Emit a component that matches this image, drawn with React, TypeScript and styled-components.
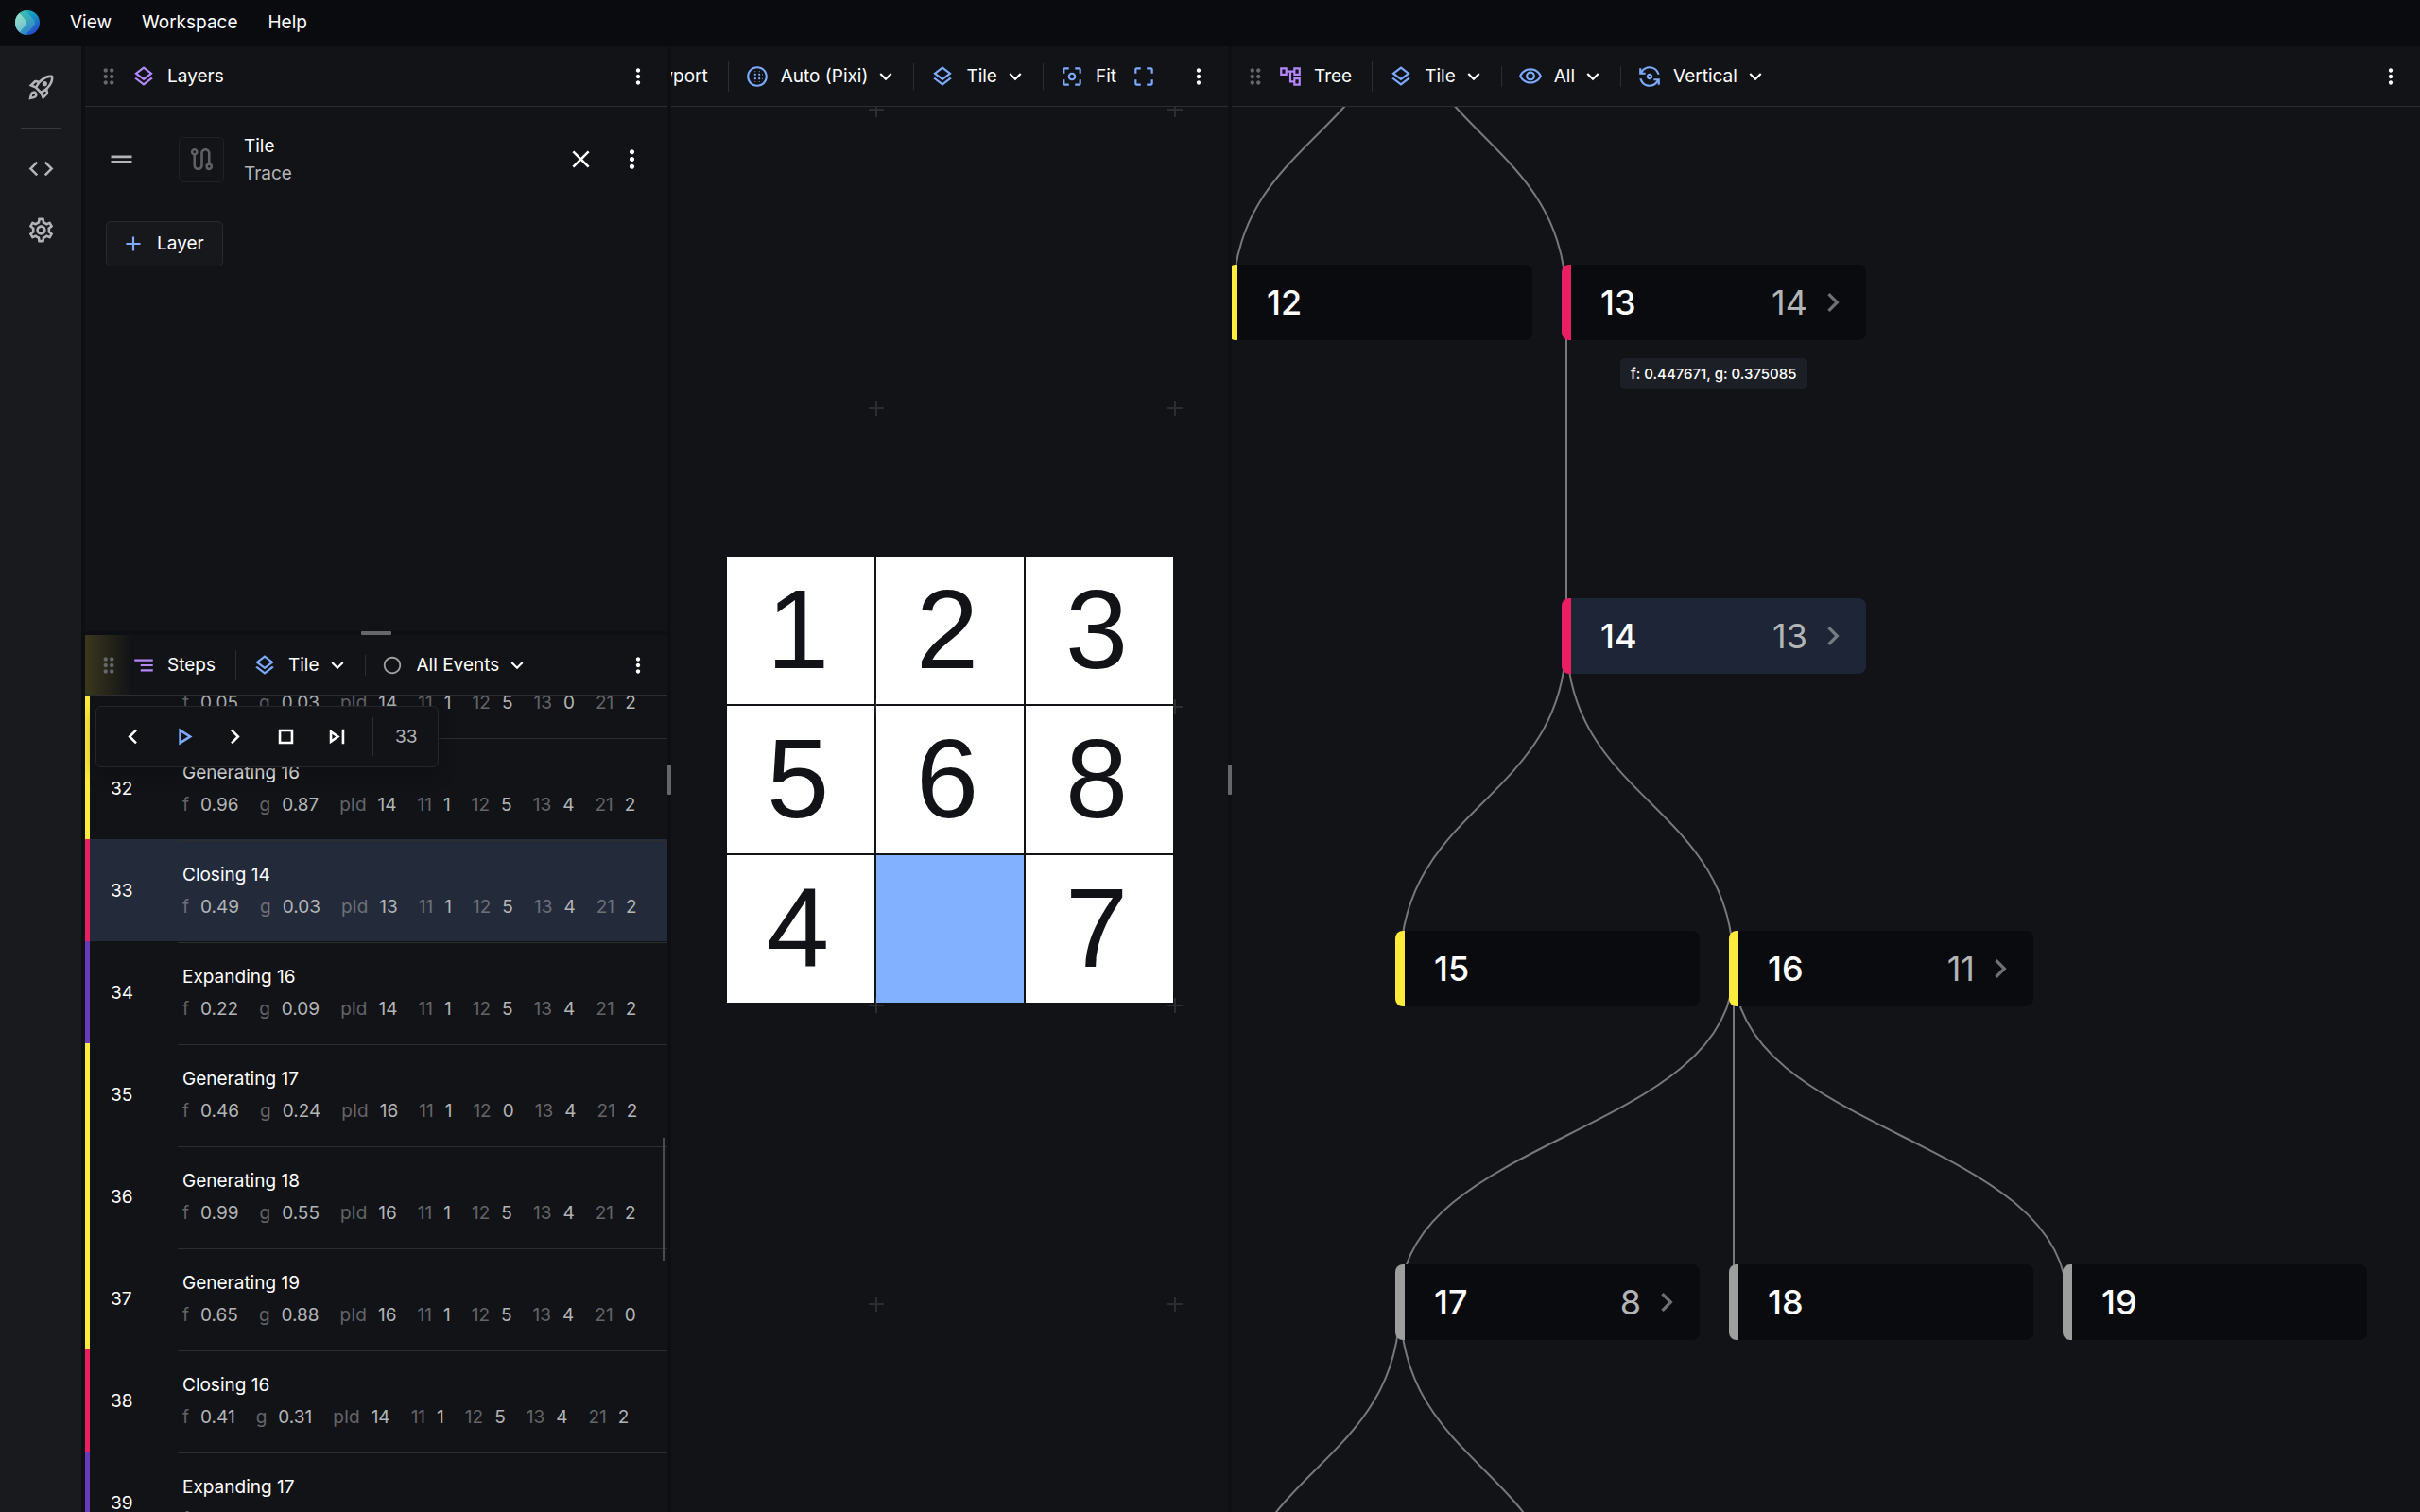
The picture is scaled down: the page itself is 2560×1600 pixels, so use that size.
import React from "react";
import styled, { createGlobalStyle, css } from "styled-components";
import {
  MdAdd,
  MdBlurCircular,
  MdCenterFocusWeak,
  MdChevronRight,
  MdClose,
  MdCode,
  MdCropFree,
  MdDragHandle,
  MdDragIndicator,
  MdExpandMore,
  MdMoreVert,
  MdNavigateBefore,
  MdNavigateNext,
  MdOutlineAccountTree,
  MdOutlineCircle,
  MdOutlineFlipCameraAndroid,
  MdOutlineLayers,
  MdOutlinePlayArrow,
  MdOutlineRocketLaunch,
  MdOutlineRoute,
  MdOutlineSettings,
  MdOutlineSkipNext,
  MdOutlineStop,
  MdOutlineVisibility,
  MdSegment,
} from "react-icons/md";

const color = {
  bar: "#0a0b0f",
  rail: "#191a1e",
  gutter: "#0e0f12",
  panel: "#121317",
  raised: "#17181c",
  line: "#2c2d31",
  text: "#ffffff",
  muted: "#b3b4b6",
  faint: "#66676a",
  blue: "#7caaff",
  purple: "#b388ff",
  yellow: "#ffeb3b",
  pink: "#e91e63",
  violet: "#673ab7",
  grey: "#9e9e9e",
};

const GlobalStyle = createGlobalStyle`
  *, *::before, *::after { box-sizing: border-box; }
  body {
    margin: 0;
    background: ${color.gutter};
    color: ${color.text};
    font-family: Inter, "Liberation Sans", sans-serif;
    font-size: 19px;
    line-height: 26px;
  }
  button, select {
    margin: 0;
    padding: 0;
    border: 0;
    background: none;
    color: inherit;
    font: inherit;
    cursor: pointer;
  }
  svg { display: block; flex: none; }
`;

/* ---------- shell ---------- */

const Shell = styled.div`
  display: flex;
  flex-direction: column;
  height: 100vh;
  overflow: hidden;
`;

const AppBar = styled.header`
  display: flex;
  align-items: center;
  flex: none;
  height: 49px;
  padding: 0 16px 2px;
  gap: 32px;
  background: ${color.bar};
`;

const MenuBar = styled.nav`
  display: flex;
  gap: 32px;
`;

const Workspace = styled.div`
  display: flex;
  flex: 1;
  min-height: 0;
`;

const Rail = styled.aside`
  display: flex;
  flex-direction: column;
  align-items: center;
  flex: none;
  width: 86px;
  margin-right: 4px;
  padding-top: 11px;
  background: ${color.rail};
`;

const RailButton = styled.button`
  display: grid;
  place-items: center;
  width: 65px;
  height: 65px;
  color: ${color.muted};
`;

const RailRule = styled.hr`
  width: 43px;
  height: 1px;
  margin: 10px 0;
  border: 0;
  background: #37383b;
`;

const Columns = styled.main`
  display: grid;
  flex: 1;
  min-width: 0;
  grid-template-columns: minmax(0, 616fr) 4px minmax(0, 589fr) 4px minmax(0, 1257fr);
`;

const Stack = styled.div`
  display: grid;
  min-height: 0;
  grid-template-rows: minmax(0, 619fr) 4px minmax(0, 928fr);
`;

const Splitter = styled.div<{ $horizontal?: boolean }>`
  display: grid;
  place-items: center;

  &::after {
    content: "";
    width: ${(p) => (p.$horizontal ? "32px" : "4px")};
    height: ${(p) => (p.$horizontal ? "4px" : "32px")};
    border-radius: 1px;
    background: #66676a;
  }
`;

/* ---------- panels ---------- */

const Panel = styled.section`
  display: grid;
  grid-template: 64px minmax(0, 1fr) / minmax(0, 1fr);
  min-width: 0;
  min-height: 0;
  overflow: hidden;
  background: ${color.panel};
`;

const PanelHeader = styled.header<{ $glow?: boolean }>`
  display: flex;
  align-items: center;
  grid-area: 1 / 1;
  z-index: 2;
  border-bottom: 1px solid ${color.line};
  background: ${(p) =>
    p.$glow
      ? `linear-gradient(90deg, rgba(255, 235, 59, 0.17), rgba(255, 235, 59, 0) 48px), ${color.panel}`
      : color.panel};
`;

const PanelBody = styled.div`
  position: relative;
  grid-area: 1 / 1 / 3 / 2;
  min-height: 0;
  overflow: hidden;
`;

const HeaderStrip = styled.div<{ $end?: boolean }>`
  display: flex;
  align-items: center;
  justify-content: ${(p) => (p.$end ? "flex-end" : "flex-start")};
  flex: 1;
  min-width: 0;
  padding-right: ${(p) => (p.$end ? "14px" : "0")};
  overflow: hidden;
  white-space: nowrap;
`;

const DragGrip = styled.span`
  display: grid;
  place-items: center;
  flex: none;
  width: 49px;
  color: #66676a;
`;

const PanelTitle = styled.h2`
  display: flex;
  align-items: center;
  gap: 12px;
  flex: none;
  margin: 0;
  padding-right: 21px;
  font-size: 19px;
  font-weight: 400;

  svg { color: ${color.purple}; }
`;

const Rule = styled.span<{ $height: number }>`
  flex: none;
  width: 1px;
  height: ${(p) => p.$height}px;
  background: ${color.line};
`;

const toolStyle = css`
  display: flex;
  align-items: center;
  flex: none;
  padding: 0 16px 0 17px;

  > svg:first-child {
    margin-right: 12px;
    color: ${color.blue};
  }
`;

const ToolSelect = styled.label<{ $plain?: boolean }>`
  ${toolStyle}

  > svg:first-child {
    ${(p) => p.$plain && `margin-right: 15px; color: ${color.grey};`}
  }
`;

const ToolButton = styled.button`
  ${toolStyle}
`;

const ToolIconButton = styled.button`
  display: grid;
  flex: none;
  color: ${color.blue};
`;

const Picker = styled.select`
  appearance: none;
  field-sizing: content;
  margin-right: 6px;
  line-height: 26px;
  outline: 0;
`;

const MoreButton = styled.button`
  display: grid;
  place-items: center;
  flex: none;
  width: 62px;
  height: 48px;
`;

/* ---------- layers ---------- */

const LayerList = styled.div`
  display: flex;
  flex-direction: column;
  align-items: flex-start;
  gap: 28px;
  padding: 82px 11px 0;
`;

const LayerItem = styled.article`
  display: flex;
  align-items: center;
  align-self: stretch;
  height: 75px;
  padding-left: 11px;
  color: ${color.muted};
`;

const LayerThumb = styled.span`
  display: grid;
  place-items: center;
  width: 48px;
  height: 48px;
  margin: 0 21px 0 44px;
  border: 1px solid #202125;
  border-radius: 5px;
  background: #131418;
  color: #5f6063;
`;

const LayerText = styled.div`
  flex: 1;
  line-height: 29px;

  h3 {
    margin: 0;
    color: ${color.text};
    font-size: 19px;
    font-weight: 400;
  }
  p { margin: 0; }
`;

const ActionButton = styled.button<{ $accent?: boolean }>`
  display: grid;
  place-items: center;
  width: 54px;
  height: 54px;
  color: ${(p) => (p.$accent ? color.blue : color.text)};
`;

const AddLayerButton = styled.button`
  display: flex;
  align-items: center;
  gap: 12px;
  height: 48px;
  margin-left: 11px;
  padding: 0 19px 0 15px;
  border: 1px solid #292a2e;
  border-radius: 5px;
  background: ${color.raised};

  svg { color: ${color.blue}; }
`;

/* ---------- steps ---------- */

const StepList = styled.ol`
  margin: 0;
  padding: 0;
  list-style: none;
`;

const StepRow = styled.li<{ $tone: string; $active?: boolean }>`
  display: flex;
  height: 108px;
  border-left: 5px solid ${(p) => p.$tone};
  background: ${(p) => (p.$active ? "#232b3b" : "transparent")};
`;

const StepIndex = styled.span`
  display: flex;
  align-items: center;
  width: 93px;
  padding: 2px 0 0 22px;
`;

const StepContent = styled.div`
  display: flex;
  flex-direction: column;
  justify-content: center;
  flex: 1;
  min-width: 0;
  margin-top: 1px;
  padding-left: 5px;
  border-top: 1px solid ${color.line};
  line-height: 34px;
`;

const StepData = styled.dl`
  display: flex;
  gap: 22px;
  margin: 0;
  color: ${color.muted};

  div {
    display: flex;
    gap: 12px;
  }
  dt { opacity: 0.5; }
  dd { margin: 0; }
`;

const Playback = styled.div`
  position: absolute;
  top: 75px;
  left: 11px;
  z-index: 1;
  display: flex;
  align-items: center;
  height: 65px;
  padding: 0 22px 0 11px;
  border: 1px solid #25262a;
  border-radius: 6px;
  background: ${color.panel};
  box-shadow: 0 6px 16px rgba(10, 11, 15, 0.5);
`;

const PlaybackCount = styled.output`
  margin-left: 11px;
  padding-left: 23px;
  border-left: 1px solid ${color.line};
  color: ${color.muted};
  line-height: 41px;
`;

const ScrollThumb = styled.span`
  position: absolute;
  top: 532px;
  right: 2px;
  width: 3px;
  height: 130px;
  background: #4a4b4e;
`;

/* ---------- viewport ---------- */

const BoardArea = styled.div`
  display: grid;
  place-items: center;
  height: 100%;
`;

const GridMarks = styled.svg`
  grid-area: 1 / 1;
`;

const Board = styled.div`
  display: grid;
  grid-area: 1 / 1;
  grid-template-columns: repeat(3, 156px);
  grid-auto-rows: 156px;
  gap: 2px;
`;

const Tile = styled.div<{ $blank: boolean }>`
  display: grid;
  place-items: center;
  padding: 0 5px 2px 0;
  background: ${(p) => (p.$blank ? "#82b1ff" : "#ffffff")};
  color: ${color.panel};
  font-family: "Liberation Sans", Arial, sans-serif;
  font-size: 119px;
  line-height: 154px;
`;

/* ---------- tree ---------- */

const EdgeLayer = styled.svg`
  position: absolute;
  inset: 0;
  width: 100%;
  height: 100%;
`;

const NodeCard = styled.button<{ $x: number; $y: number; $tone: string; $active?: boolean }>`
  position: absolute;
  left: ${(p) => p.$x - 5}px;
  top: ${(p) => p.$y - 40}px;
  display: flex;
  align-items: center;
  width: 322px;
  height: 80px;
  padding: 0 15px 0 31px;
  overflow: hidden;
  border-radius: 8px;
  border-left: 10px solid ${(p) => p.$tone};
  background: ${(p) => (p.$active ? "#1d2536" : color.bar)};
  font-size: 36px;
  line-height: 48px;
  text-align: left;
`;

const NodeLabel = styled.span`
  flex: 1;
  font-weight: 500;
`;

const NodeLink = styled.span`
  display: flex;
  align-items: center;
  gap: 7px;
  color: ${color.muted};

  svg { opacity: 0.6; }
`;

const NodeTooltip = styled.div`
  position: absolute;
  left: 411px;
  top: 330px;
  padding: 0 11px;
  border-radius: 5px;
  background: #1c2026;
  font-size: 15px;
  font-weight: 500;
  line-height: 33px;
  white-space: nowrap;
`;

/* ---------- data ---------- */

type Step = { id: number; title: string; tone: string; values: string[] };

const stepKeys = ["f", "g", "pId", "11", "12", "13", "21"];

const steps: Step[] = [
  { id: 31, title: "Generating 15", tone: color.yellow, values: ["0.05", "0.03", "14", "1", "5", "0", "2"] },
  { id: 32, title: "Generating 16", tone: color.yellow, values: ["0.96", "0.87", "14", "1", "5", "4", "2"] },
  { id: 33, title: "Closing 14", tone: color.pink, values: ["0.49", "0.03", "13", "1", "5", "4", "2"] },
  { id: 34, title: "Expanding 16", tone: color.violet, values: ["0.22", "0.09", "14", "1", "5", "4", "2"] },
  { id: 35, title: "Generating 17", tone: color.yellow, values: ["0.46", "0.24", "16", "1", "0", "4", "2"] },
  { id: 36, title: "Generating 18", tone: color.yellow, values: ["0.99", "0.55", "16", "1", "5", "4", "2"] },
  { id: 37, title: "Generating 19", tone: color.yellow, values: ["0.65", "0.88", "16", "1", "5", "4", "0"] },
  { id: 38, title: "Closing 16", tone: color.pink, values: ["0.41", "0.31", "14", "1", "5", "4", "2"] },
  { id: 39, title: "Expanding 17", tone: color.violet, values: ["0.22", "0.09", "16", "1", "5", "4", "2"] },
];

const tiles = ["1", "2", "3", "5", "6", "8", "4", "", "7"];

type TreeNode = { id: number; x: number; y: number; tone: string; link?: number };

const nodes: TreeNode[] = [
  { id: 12, x: 1, y: 271, tone: color.yellow },
  { id: 13, x: 354, y: 271, tone: color.pink, link: 14 },
  { id: 14, x: 354, y: 624, tone: color.pink, link: 13 },
  { id: 15, x: 178, y: 976, tone: color.yellow },
  { id: 16, x: 531, y: 976, tone: color.yellow, link: 11 },
  { id: 17, x: 178, y: 1329, tone: color.grey, link: 8 },
  { id: 18, x: 531, y: 1329, tone: color.grey },
  { id: 19, x: 884, y: 1329, tone: color.grey },
];

const edges = [
  [178, -82, 1, 271],
  [178, -82, 354, 271],
  [354, 271, 354, 624],
  [354, 624, 178, 976],
  [354, 624, 531, 976],
  [531, 976, 178, 1329],
  [531, 976, 531, 1329],
  [531, 976, 884, 1329],
  [178, 1329, 1, 1682],
  [178, 1329, 354, 1682],
];

const edgePath = ([x0, y0, x1, y1]: number[]) => {
  const mid = (y0 + y1) / 2;
  return `M${x0} ${y0}C${x0} ${mid} ${x1} ${mid} ${x1} ${y1}`;
};

/* ---------- parts ---------- */

function Logo() {
  return (
    <svg width="26" height="26" viewBox="0 0 26 26" aria-hidden="true">
      <defs>
        <linearGradient id="logo-back" x1="0" y1="0" x2="0.6" y2="1">
          <stop offset="0" stopColor="#1fc9a4" />
          <stop offset="0.45" stopColor="#1398c4" />
          <stop offset="1" stopColor="#2450c8" />
        </linearGradient>
        <linearGradient id="logo-mid" x1="0" y1="0" x2="0.4" y2="1">
          <stop offset="0" stopColor="#45cfae" />
          <stop offset="1" stopColor="#2f86c9" />
        </linearGradient>
        <linearGradient id="logo-front" x1="0" y1="0" x2="0.3" y2="1">
          <stop offset="0" stopColor="#9fe6c4" />
          <stop offset="1" stopColor="#6fc0cf" />
        </linearGradient>
        <clipPath id="logo-clip">
          <circle cx="13" cy="13" r="13" />
        </clipPath>
      </defs>
      <g clipPath="url(#logo-clip)">
        <rect width="26" height="26" fill="url(#logo-back)" />
        <path d="M-2 -2H9l10 11q4 4 0 8L9 28H-2z" fill="url(#logo-mid)" />
        <path d="M-2 0H2l8 9q4 4 0 8l-7 8H-2z" fill="url(#logo-front)" />
      </g>
    </svg>
  );
}

function ToolPicker({ icon, label, value, plain }: { icon: React.ReactNode; label: string; value: string; plain?: boolean }) {
  return (
    <ToolSelect $plain={plain}>
      {icon}
      <Picker aria-label={label} defaultValue={value}>
        <option>{value}</option>
      </Picker>
      <MdExpandMore size={26} />
    </ToolSelect>
  );
}

function Grip() {
  return (
    <DragGrip>
      <MdDragIndicator size={26} />
    </DragGrip>
  );
}

function More() {
  return (
    <MoreButton aria-label="Panel options">
      <MdMoreVert size={26} />
    </MoreButton>
  );
}

function LayersPanel() {
  return (
    <Panel>
      <PanelHeader>
        <HeaderStrip>
          <Grip />
          <PanelTitle>
            <MdOutlineLayers size={26} />
            Layers
          </PanelTitle>
        </HeaderStrip>
        <More />
      </PanelHeader>
      <PanelBody>
        <LayerList>
          <LayerItem>
            <MdDragHandle size={33} />
            <LayerThumb>
              <MdOutlineRoute size={31} />
            </LayerThumb>
            <LayerText>
              <h3>Tile</h3>
              <p>Trace</p>
            </LayerText>
            <ActionButton aria-label="Remove layer">
              <MdClose size={31} />
            </ActionButton>
            <ActionButton aria-label="Layer options">
              <MdMoreVert size={31} />
            </ActionButton>
          </LayerItem>
          <AddLayerButton>
            <MdAdd size={26} />
            Layer
          </AddLayerButton>
        </LayerList>
      </PanelBody>
    </Panel>
  );
}

function StepsPanel() {
  return (
    <Panel>
      <PanelHeader $glow>
        <HeaderStrip>
          <Grip />
          <PanelTitle>
            <MdSegment size={26} />
            Steps
          </PanelTitle>
          <Rule $height={32} />
          <ToolPicker icon={<MdOutlineLayers size={26} />} label="Layer" value="Tile" />
          <Rule $height={22} />
          <ToolPicker icon={<MdOutlineCircle size={22} />} label="Event type" value="All Events" plain />
        </HeaderStrip>
        <More />
      </PanelHeader>
      <PanelBody>
        <StepList>
          {steps.map((step) => (
            <StepRow key={step.id} $tone={step.tone} $active={step.id === 33}>
              <StepIndex>{step.id}</StepIndex>
              <StepContent>
                <span>{step.title}</span>
                <StepData>
                  {step.values.map((value, i) => (
                    <div key={stepKeys[i]}>
                      <dt>{stepKeys[i]}</dt>
                      <dd>{value}</dd>
                    </div>
                  ))}
                </StepData>
              </StepContent>
            </StepRow>
          ))}
        </StepList>
        <Playback>
          <ActionButton aria-label="Previous step">
            <MdNavigateBefore size={31} />
          </ActionButton>
          <ActionButton aria-label="Play" $accent>
            <MdOutlinePlayArrow size={31} />
          </ActionButton>
          <ActionButton aria-label="Next step">
            <MdNavigateNext size={31} />
          </ActionButton>
          <ActionButton aria-label="Stop">
            <MdOutlineStop size={31} />
          </ActionButton>
          <ActionButton aria-label="Skip to end">
            <MdOutlineSkipNext size={31} />
          </ActionButton>
          <PlaybackCount>33</PlaybackCount>
        </Playback>
        <ScrollThumb />
      </PanelBody>
    </Panel>
  );
}

function ViewportPanel() {
  const marks: string[] = [];
  for (const x of [-394, -78, 238]) {
    for (const y of [-709, -393, -77, 239, 555]) {
      marks.push(`M${x - 8} ${y}h16M${x} ${y - 8}v16`);
    }
  }
  return (
    <Panel>
      <PanelHeader>
        <HeaderStrip $end>
          <Grip />
          <PanelTitle>Viewport</PanelTitle>
          <Rule $height={32} />
          <ToolPicker icon={<MdBlurCircular size={26} />} label="Renderer" value="Auto (Pixi)" />
          <Rule $height={28} />
          <ToolPicker icon={<MdOutlineLayers size={26} />} label="Layer" value="Tile" />
          <Rule $height={28} />
          <ToolButton>
            <MdCenterFocusWeak size={26} />
            Fit
          </ToolButton>
          <ToolIconButton aria-label="Fullscreen">
            <MdCropFree size={26} />
          </ToolIconButton>
        </HeaderStrip>
        <More />
      </PanelHeader>
      <PanelBody>
        <BoardArea>
          <GridMarks width="588" height="1550" viewBox="-294 -775 588 1550" aria-hidden="true">
            <path d={marks.join("")} stroke="#2c2d31" strokeWidth="2" fill="none" />
          </GridMarks>
          <Board>
            {tiles.map((tile, i) => (
              <Tile key={i} $blank={tile === ""}>
                {tile}
              </Tile>
            ))}
          </Board>
        </BoardArea>
      </PanelBody>
    </Panel>
  );
}

function TreePanel() {
  return (
    <Panel>
      <PanelHeader>
        <HeaderStrip>
          <Grip />
          <PanelTitle>
            <MdOutlineAccountTree size={26} />
            Tree
          </PanelTitle>
          <Rule $height={32} />
          <ToolPicker icon={<MdOutlineLayers size={26} />} label="Layer" value="Tile" />
          <Rule $height={22} />
          <ToolPicker icon={<MdOutlineVisibility size={26} />} label="Visible nodes" value="All" />
          <Rule $height={22} />
          <ToolPicker icon={<MdOutlineFlipCameraAndroid size={26} />} label="Orientation" value="Vertical" />
        </HeaderStrip>
        <More />
      </PanelHeader>
      <PanelBody>
        <EdgeLayer aria-hidden="true">
          {edges.map((edge) => (
            <path key={edge.join()} d={edgePath(edge)} stroke="#77787b" strokeWidth="2" fill="none" />
          ))}
        </EdgeLayer>
        {nodes.map((node) => (
          <NodeCard key={node.id} $x={node.x} $y={node.y} $tone={node.tone} $active={node.id === 14}>
            <NodeLabel>{node.id}</NodeLabel>
            {node.link !== undefined && (
              <NodeLink>
                {node.link}
                <MdChevronRight size={40} />
              </NodeLink>
            )}
          </NodeCard>
        ))}
        <NodeTooltip role="tooltip">f: 0.447671, g: 0.375085</NodeTooltip>
      </PanelBody>
    </Panel>
  );
}

export default function App() {
  return (
    <Shell>
      <GlobalStyle />
      <AppBar>
        <Logo />
        <MenuBar>
          <button>View</button>
          <button>Workspace</button>
          <button>Help</button>
        </MenuBar>
      </AppBar>
      <Workspace>
        <Rail>
          <RailButton aria-label="Explore">
            <MdOutlineRocketLaunch size={31} />
          </RailButton>
          <RailRule />
          <RailButton aria-label="Source code">
            <MdCode size={31} />
          </RailButton>
          <RailButton aria-label="Settings">
            <MdOutlineSettings size={31} />
          </RailButton>
        </Rail>
        <Columns>
          <Stack>
            <LayersPanel />
            <Splitter $horizontal />
            <StepsPanel />
          </Stack>
          <Splitter />
          <ViewportPanel />
          <Splitter />
          <TreePanel />
        </Columns>
      </Workspace>
    </Shell>
  );
}
